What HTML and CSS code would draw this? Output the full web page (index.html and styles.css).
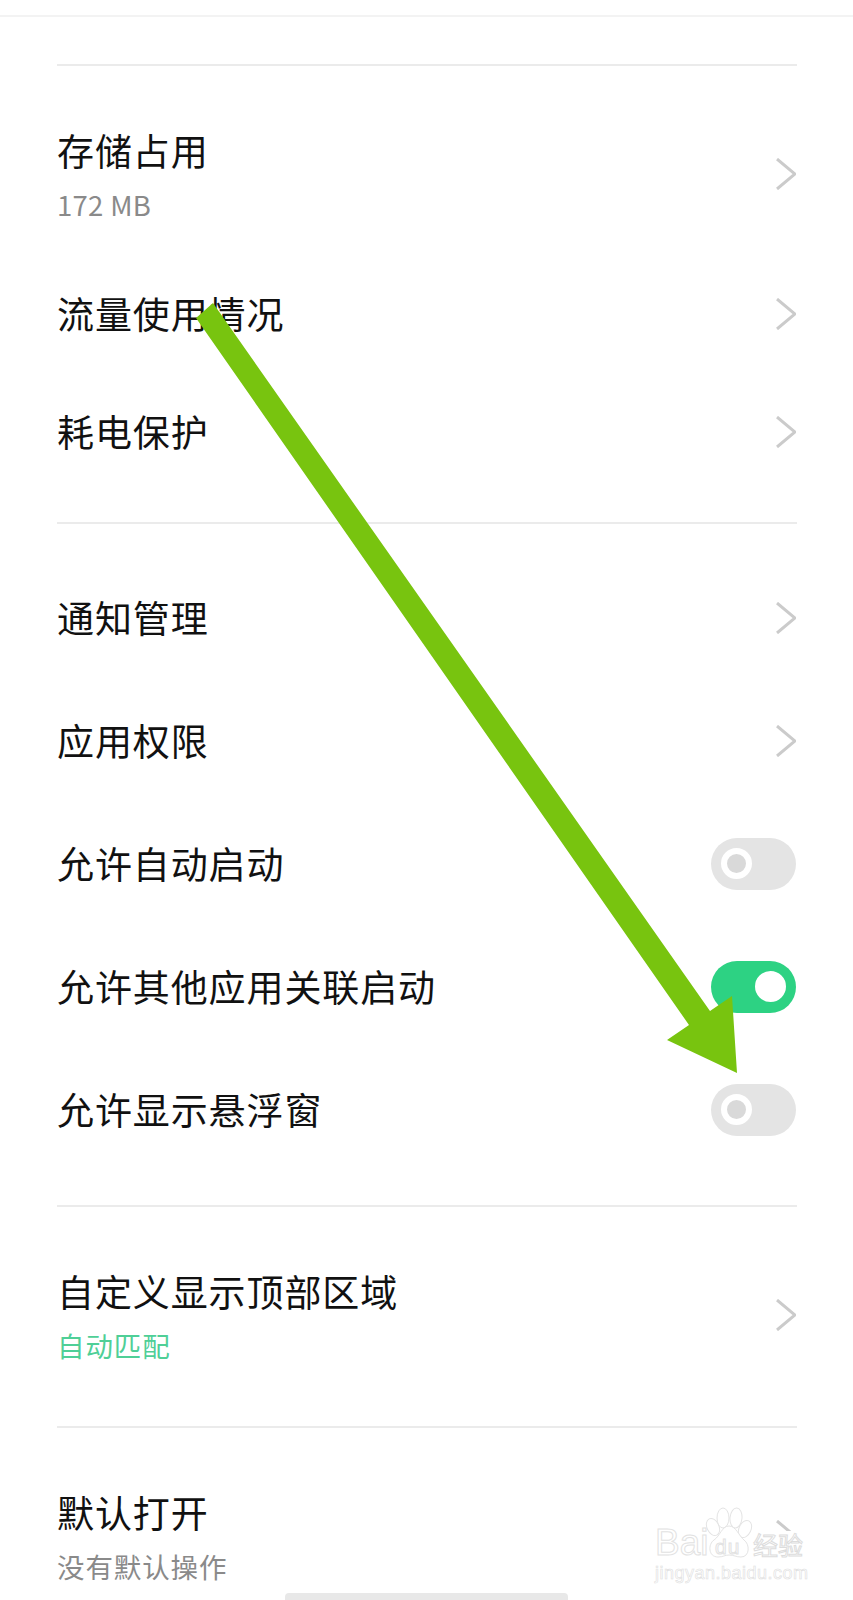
FILE: index.html
```html
<!DOCTYPE html>
<html lang="zh-CN">
<head>
    <meta charset="UTF-8">
    <meta name="viewport" content="width=device-width, initial-scale=1.0">
    <title>应用信息</title>
    <link rel="stylesheet" href="styles.css">
</head>
<body>
    <div class="screen">
        <div class="header"></div>

        <section class="group group-usage">
            <div class="row row-tall">
                <div class="label">
                    <div class="title">存储占用</div>
                    <div class="sub num">172 MB</div>
                </div>
                <svg class="chevron" viewBox="0 0 20 32"><path d="M1 1 L19 16 L1 31"/></svg>
            </div>
            <div class="row row-short">
                <div class="title">流量使用情况</div>
                <svg class="chevron" viewBox="0 0 20 32"><path d="M1 1 L19 16 L1 31"/></svg>
            </div>
            <div class="row row-short">
                <div class="title">耗电保护</div>
                <svg class="chevron" viewBox="0 0 20 32"><path d="M1 1 L19 16 L1 31"/></svg>
            </div>
        </section>

        <section class="group group-perms">
            <div class="row">
                <div class="title">通知管理</div>
                <svg class="chevron" viewBox="0 0 20 32"><path d="M1 1 L19 16 L1 31"/></svg>
            </div>
            <div class="row">
                <div class="title">应用权限</div>
                <svg class="chevron" viewBox="0 0 20 32"><path d="M1 1 L19 16 L1 31"/></svg>
            </div>
            <div class="row">
                <div class="title">允许自动启动</div>
                <div class="switch"><span class="knob"></span></div>
            </div>
            <div class="row">
                <div class="title">允许其他应用关联启动</div>
                <div class="switch on"><span class="knob"></span></div>
            </div>
            <div class="row">
                <div class="title">允许显示悬浮窗</div>
                <div class="switch"><span class="knob"></span></div>
            </div>
        </section>

        <section class="group group-display">
            <div class="row row-tall">
                <div class="label">
                    <div class="title">自定义显示顶部区域</div>
                    <div class="sub green">自动匹配</div>
                </div>
                <svg class="chevron" viewBox="0 0 20 32"><path d="M1 1 L19 16 L1 31"/></svg>
            </div>
        </section>

        <section class="group group-default">
            <div class="row row-tall">
                <div class="label">
                    <div class="title">默认打开</div>
                    <div class="sub">没有默认操作</div>
                </div>
                <svg class="chevron" viewBox="0 0 20 32"><path d="M1 1 L19 16 L1 31"/></svg>
            </div>
        </section>

        <div class="home-bar"></div>

        <!-- 箭头标注 -->
        <svg class="arrow" viewBox="0 0 853 1600">
            <polygon points="213,303 710,1011 732,996 737,1073 667,1040 689,1025 196,318"/>
        </svg>

        <!-- 右下角水印 -->
        <div class="watermark">
            <svg class="paw" viewBox="0 0 48 54">
                <ellipse cx="8" cy="21" rx="6" ry="9" transform="rotate(-25 8 21)"/>
                <ellipse cx="18" cy="12" rx="6" ry="10"/>
                <ellipse cx="31" cy="12" rx="6" ry="10" transform="rotate(5 31 12)"/>
                <ellipse cx="40" cy="23" rx="6" ry="9" transform="rotate(25 40 23)"/>
                <path d="M24 20 C17 20 15 30 9 34 C3 38 3 51 13 51 C18 51 20 49 24 49 C29 49 31 51 36 51 C45 51 45 38 39 34 C34 30 31 20 24 20 Z"/>
            </svg>
            <span class="wm-bai">Bai</span>
            <span class="wm-du">du</span>
            <span class="wm-cn">经验</span>
            <div class="wm-url">jingyan.baidu.com</div>
        </div>
    </div>
</body>
</html>
```

FILE: styles.css
```css
* {
    box-sizing: border-box;
}
html, body {
    margin: 0;
    padding: 0;
    background: #fff;
}
.screen {
    position: relative;
    width: 853px;
    height: 1600px;
    overflow: hidden;
    background: #fff;
    font-family: "Noto Sans CJK SC", "Liberation Sans", sans-serif;
    color: #111;
}
.header {
    height: 17px;
    border-bottom: 2px solid #f3f3f3;
}
.group {
    margin: 0 56px 0 57px;
    border-top: 2px solid #ebebeb;
}
.group-usage {
    margin-top: 47px;
    height: 458px;
    padding-top: 27px;
}
.group-perms {
    height: 683px;
    padding-top: 32px;
}
.group-display {
    height: 221px;
    padding-top: 27px;
}
.group-default {
    padding-top: 27px;
}
.row {
    display: flex;
    align-items: center;
    justify-content: space-between;
    height: 123px;
    padding-right: 1px;
}
.row-tall {
    height: 162px;
}
.row-short {
    height: 118px;
}
.title {
    font-size: 37px;
    line-height: 48px;
    letter-spacing: 0.9px;
}
.row > .title {
    padding-bottom: 2px;
}
.sub {
    margin-top: 12px;
    font-size: 27.5px;
    line-height: 36px;
    letter-spacing: 0.9px;
    color: #8a8a8a;
}
.sub.num {
    letter-spacing: 0.3px;
}
.sub.green {
    color: #4fcf97;
}
.chevron {
    width: 20px;
    height: 32px;
    fill: none;
    stroke: #cbcbcb;
    stroke-width: 3;
}
.switch {
    display: flex;
    align-items: center;
    width: 85px;
    height: 52px;
    padding: 0 10px;
    border-radius: 26px;
    background: #e4e4e4;
}
.knob {
    width: 31px;
    height: 31px;
    border: 6px solid #fff;
    border-radius: 50%;
    background: #d9d9d9;
}
.switch.on {
    justify-content: flex-end;
    background: #2dd283;
}
.switch.on .knob {
    background: #fff;
}
.home-bar {
    position: absolute;
    left: 285px;
    bottom: 0;
    width: 283px;
    height: 7px;
    border-radius: 4px 4px 0 0;
    background: #e8e8e8;
}
.arrow {
    position: absolute;
    top: 0;
    left: 0;
    width: 853px;
    height: 1600px;
    fill: #78c40f;
}
.watermark {
    position: absolute;
    left: 650px;
    top: 1505px;
    width: 160px;
    height: 88px;
}
.paw {
    position: absolute;
    left: 55px;
    top: 1px;
    width: 48px;
    height: 54px;
    fill: #fff;
    stroke: #e4e4e4;
    stroke-width: 1;
}
.wm-bai, .wm-du, .wm-url {
    position: absolute;
    font-family: "Liberation Sans", sans-serif;
    color: #fff;
    -webkit-text-stroke: 1px #e2e2e2;
}
.wm-bai {
    top: 18px;
    left: 5px;
    font-size: 37px;
    line-height: 40px;
}
.wm-du {
    top: 30px;
    left: 65px;
    font-size: 21px;
    line-height: 24px;
    letter-spacing: 1px;
}
.wm-cn {
    position: absolute;
    top: 26px;
    left: 103px;
    width: 52px;
    height: 27px;
    font-size: 25px;
    line-height: 27px;
    background: #fff;
    color: #fff;
    -webkit-text-stroke: 1px #dcdcdc;
}
.wm-url {
    top: 57px;
    left: 5px;
    font-size: 18px;
    line-height: 22px;
    letter-spacing: 0.5px;
    -webkit-text-stroke: 0.6px #dedede;
}
```
